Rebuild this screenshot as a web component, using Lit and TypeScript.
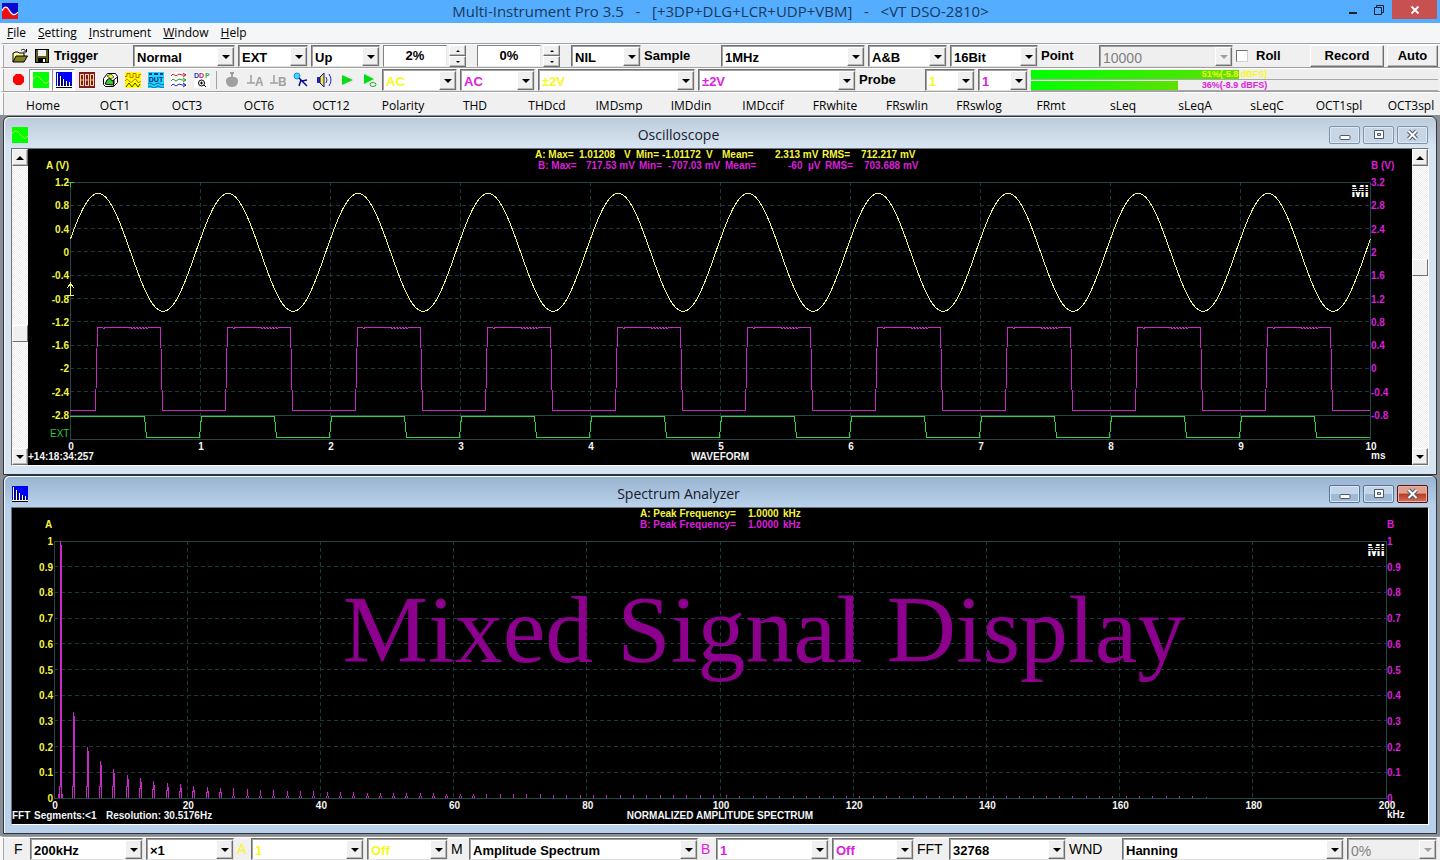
import { LitElement, html, svg, css, nothing, TemplateResult } from "lit";
import { customElement, property, state } from "lit/decorators.js";
import { classMap } from "lit/directives/class-map.js";
import { styleMap } from "lit/directives/style-map.js";

/* ---------- charts ---------- */

const chartStyles = css`
  :host {
    display: block;
    flex: 1;
    min-width: 0;
    min-height: 0;
    overflow: hidden;
    background: #000;
  }
  svg {
    display: block;
    font: bold 10px "Liberation Sans", Arial, sans-serif;
    shape-rendering: crispEdges;
  }
  .line { stroke: #1f4848; fill: none; }
  .dash { stroke: #1a3a3a; stroke-dasharray: 4 3; fill: none; }
  .a { fill: #f4f440; }
  .b { fill: #dc1edc; }
  .w { fill: #f4f4f4; }
  .g { fill: #2fc43c; font-weight: normal; }
  .end { text-anchor: end; }
  .mid { text-anchor: middle; }
  .trace { fill: none; stroke-width: 1; }
  .ta { stroke: #f6f67a; }
  .tb { stroke: #c828c8; }
  .tg { stroke: #35cf45; }
  .logo { fill: #fff; font-size: 16px; text-anchor: end; }
  .stripe { stroke: #000; }
  .banner { font: 96px "Liberation Serif", "Times New Roman", serif; fill: #8d008d; text-anchor: middle; }
`;

class Chart extends LitElement {
  @state() w = 1384;
  @state() h = 316;
  private watcher?: ResizeObserver;
  connectedCallback() {
    super.connectedCallback();
    this.watcher = new ResizeObserver(([e]) => {
      this.w = Math.round(e.contentRect.width);
      this.h = Math.round(e.contentRect.height);
    });
    this.watcher.observe(this);
  }
  disconnectedCallback() {
    super.disconnectedCallback();
    this.watcher?.disconnect();
  }
  logo(x: number, y: number) {
    return svg`<text class="logo" x=${x} y=${y + 11}>MI</text>
      ${[1, 3, 5].map((d) => svg`<line class="stripe" x1=${x - 20} x2=${x + 1} y1=${y + d + 0.5} y2=${y + d + 0.5} />`)}`;
  }
}

const px = (n: number) => Math.floor(n) + 0.5;

@customElement("scope-chart")
class ScopeChart extends Chart {
  static styles = chartStyles;

  render() {
    const { w, h } = this;
    const L = 42, R = w - 42, T = 33, B = h - 26, S = B - 24;
    const cx = w / 2;
    const step = (S - T) / 10;
    const per = (R - L) / 10;
    const mid = T + step * 3;
    const amp = (1.012 / 0.4) * step;

    const sine: string[] = [];
    for (let x = L; x <= R; x++) {
      const y = mid - amp * Math.sin(2 * Math.PI * ((x - L) / per + 0.037));
      sine.push(`${x + 0.5},${(y + 0.5).toFixed(1)}`);
    }
    const zero = T + step * 8;
    const hi = px(zero - (0.7 / 0.4) * step), lo = px(zero + (0.72 / 0.4) * step);
    const sq: string[] = [`${L},${lo}`];
    const ext: string[] = [`${L},${S + 1.5}`];
    for (let i = 0; i < 10; i++) {
      const x = L + i * per + 0.5;
      const up = x + 0.2 * per, dn = x + 0.7 * per;
      sq.push(`${up - 1},${lo}`, `${up},${zero}`, `${up + 1},${hi}`);
      sq.push(`${up + 6},${hi}`, `${up + 7},${hi + 1}`, `${up + 9},${hi}`, `${up + 34},${hi}`);
      for (let k = 36; k < 54; k += 3) sq.push(`${up + k},${hi + 1}`, `${up + k + 1},${hi}`);
      sq.push(`${dn - 1},${hi}`, `${dn},${zero}`, `${dn + 1},${lo}`);
      const fall = x + 0.577 * per;
      ext.push(`${fall - 1},${S + 1.5}`, `${fall + 1},${B - 1.5}`);
      ext.push(`${x + per - 1},${B - 1.5}`);
      if (i < 9) ext.push(`${x + per + 1},${S + 1.5}`);
    }
    sq.push(`${R},${lo}`);
    ext.push(`${R},${B - 1.5}`);

    const ticks = Array.from({ length: 11 }, (_, i) => i);
    const fmt = (n: number) => String(Math.round(n * 10) / 10);
    const rowA: [number, string][] = [
      [-185, "A: Max="], [-141, "1.01208"], [-96, "V"], [-84, "Min="], [-58, "-1.01172"], [-14, "V"],
      [2, "Mean="], [55, "2.313 mV"], [102, "RMS="], [141, "712.217 mV"],
    ];
    const rowB: [number, string][] = [
      [-182, "B: Max="], [-134, "717.53 mV"], [-81, "Min="], [-52, "-707.03 mV"],
      [5, "Mean="], [68, "-60"], [88, "µV"], [105, "RMS="], [144, "703.688 mV"],
    ];

    return html`<svg width=${w} height=${h} role="img" aria-label="Waveform">
      ${ticks.slice(1, 10).map((i) => svg`
        <line class="dash" x1=${L} x2=${R} y1=${px(T + i * step)} y2=${px(T + i * step)} />
        <line class="dash" x1=${px(L + i * per)} x2=${px(L + i * per)} y1=${T} y2=${B} />`)}
      <rect class="line" x=${L + 0.5} y=${T + 0.5} width=${R - L} height=${B - T} />
      <line class="line" x1=${L} x2=${R} y1=${S + 0.5} y2=${S + 0.5} />
      <polyline class="trace ta" points=${sine.join(" ")} />
      <polyline class="trace tb" points=${sq.join(" ")} />
      <polyline class="trace tg" points=${ext.join(" ")} />
      <path class="trace tg" d="M${L - 3} ${T + 0.5}h7M${L + 0.5} ${T}v5" />
      <path class="trace ta" d="M${L - 3} ${T + 113.5}h7M${L + 0.5} ${T + 113}v-12l-3 5m3 -5l3 5" />
      ${ticks.map((i) => svg`
        <text class="a end" x=${L - 1} y=${Math.round(T + i * step + 4)}>${fmt(1.2 - 0.4 * i)}</text>
        <text class="b" x=${R + 1} y=${Math.round(T + i * step + 4)}>${fmt(3.2 - 0.4 * i)}</text>
        <text class="w mid" x=${L + 1 + i * per} y=${B + 11}>${i}</text>`)}
      <text class="a" x="18" y="20">A (V)</text>
      <text class="b" x=${R + 1} y="20">B (V)</text>
      <text class="g" x="22" y=${B - 2}>EXT</text>
      <text class="w" x="0" y=${h - 5}>+14:18:34:257</text>
      <text class="w mid" x=${cx} y=${h - 5}>WAVEFORM</text>
      <text class="w" x=${R + 1} y=${h - 6}>ms</text>
      ${rowA.map(([dx, t]) => svg`<text class="a" x=${cx + dx} y="9">${t}</text>`)}
      ${rowB.map(([dx, t]) => svg`<text class="b" x=${cx + dx} y="20">${t}</text>`)}
      ${this.logo(R - 1, T + 4)}
    </svg>`;
  }
}

@customElement("spectrum-chart")
class SpectrumChart extends Chart {
  static styles = chartStyles;

  render() {
    const { w, h } = this;
    const L = 42, R = w - 42, T = 33, B = h - 26;
    const cx = w / 2;
    const step = (B - T) / 10, per = (R - L) / 10;
    const ticks = Array.from({ length: 11 }, (_, i) => i);
    const spikes: string[] = [];
    for (let k = 1; k < 174; k += 2) {
      const x = Math.floor(L + (k / 200) * (R - L)) + 0.5;
      const a = (B - T) / k;
      const top = B - Math.max(1, a);
      if (a > 10) {
        const foot = B - Math.min(12, a / 2);
        spikes.push(`M${x - 1} ${B}V${foot}L${x} ${foot}V${top}M${x + 1} ${B}V${top + 4}`);
        if (k === 1) spikes.push(`M${x - 2} ${B}v-4M${x + 2} ${B}v-4`);
      } else if (a > 4) {
        spikes.push(`M${x - 1} ${B}v-2M${x} ${B - 2}V${top}M${x + 1} ${B}v-2`);
      } else {
        spikes.push(`M${x} ${B}V${top}`);
      }
    }
    return html`<svg width=${w} height=${h} role="img" aria-label="Normalized amplitude spectrum">
      ${ticks.slice(1, 10).map((i) => svg`
        <line class="dash" x1=${L} x2=${R} y1=${px(T + i * step)} y2=${px(T + i * step)} />
        <line class="dash" x1=${px(L + i * per)} x2=${px(L + i * per)} y1=${T} y2=${B} />`)}
      <rect class="line" x=${L + 0.5} y=${T + 0.5} width=${R - L} height=${B - T} />
      <path class="trace tb" d=${spikes.join("")} />
      ${ticks.map((i) => svg`
        <text class="a end" x=${L - 1} y=${Math.round(T + i * step + 4)}>${(10 - i) / 10}</text>
        <text class="b" x=${R + 1} y=${Math.round(T + i * step + 4)}>${(10 - i) / 10}</text>
        <text class="w mid" x=${L + 1 + i * per} y=${B + 11}>${i * 20}</text>`)}
      <text class="a" x="33" y="20">A</text>
      <text class="b" x=${R + 1} y="20">B</text>
      <text class="a" x=${cx - 80} y="9">A: Peak Frequency=</text>
      <text class="a" x=${cx + 28} y="9">1.0000</text>
      <text class="a" x=${cx + 63} y="9">kHz</text>
      <text class="b" x=${cx - 80} y="20">B: Peak Frequency=</text>
      <text class="b" x=${cx + 28} y="20">1.0000</text>
      <text class="b" x=${cx + 63} y="20">kHz</text>
      <text class="w" x="0" y=${h - 5}>FFT</text>
      <text class="w" x="22" y=${h - 5}>Segments:&lt;1</text>
      <text class="w" x="94" y=${h - 5}>Resolution: 30.5176Hz</text>
      <text class="w mid" x=${cx} y=${h - 5}>NORMALIZED AMPLITUDE SPECTRUM</text>
      <text class="w" x=${R + 1} y=${h - 6}>kHz</text>
      ${this.logo(R - 1, T + 4)}
      <text class="banner" x=${cx + 44} y="154">Mixed Signal Display</text>
    </svg>`;
  }
}

/* ---------- icons ---------- */

const ico = (name: string, body: TemplateResult) =>
  html`<svg class="ico" width="16" height="16" viewBox="0 0 16 16" role="img" aria-label=${name}>${body}</svg>`;

const openIcon = ico("Open", svg`
  <path d="M1 14V5h1l1-1h3l1 1h5v3" fill="#ffff99" stroke="#000"/>
  <path d="M1 14l3-6h11.500l-3.500 6z" fill="#808020" stroke="#000"/>
  <path d="M9 2.500c2-2 4-1 5 1M14.500 1v3h-3" fill="none" stroke="#000"/>`);
const saveIcon = ico("Save", svg`
  <rect x="1.500" y="1.500" width="13" height="13" fill="#5c5c1c" stroke="#000"/>
  <rect x="4" y="2" width="8" height="6" fill="#f0f0f0"/>
  <rect x="4" y="10" width="8" height="4" fill="#000"/><rect x="9" y="11" width="2" height="3" fill="#fff"/>`);
const sineIcon = ico("Oscilloscope", svg`
  <rect width="16" height="16" fill="#00ff00"/>
  <path d="M0 7C2 3 5 3 8 7s5 6 8 2" fill="none" stroke="#c8e040"/>`);
const barsIcon = ico("Spectrum analyzer", svg`
  <rect width="16" height="14" fill="#0000ff"/>
  <path d="M0 14.500h16" stroke="#fff"/><path d="M0 15.500h16" stroke="#000"/>
  <path d="M1.500 1v13M4.500 4v10M7.500 7v7M10.500 9v5M13.500 10v4" stroke="#fff"/>
  <path d="M2.500 2v12M5.500 5v9M8.500 8v6M11.500 10v4M14.500 11v3" stroke="#000"/>`);
const appIcon = ico("Multi-Instrument", svg`
  <rect width="16" height="16" fill="#ee1010"/>
  <path d="M0 0h16v10q-3 4-5 1L7 6Q4 2 0 7z" fill="#0808d0"/>
  <path d="M0 8c2-5 5-5 7-1s5 7 9 2" fill="none" stroke="#fff" stroke-width="1.200"/>`);

const tools: { icon: TemplateResult; on?: boolean; sep?: boolean }[] = [
  { icon: ico("Start", svg`<path d="M6 2h5l3 3v5l-3 3H6l-3-3V5z" fill="#f00"/>`) },
  { icon: sineIcon, on: true },
  { icon: barsIcon, on: true },
  { icon: ico("Multimeter", svg`<rect width="16" height="16" fill="#801828"/>
    <g fill="none" stroke="#f4d890"><rect x="1.500" y="2.500" width="3" height="11"/><rect x="6.500" y="2.500" width="3" height="11"/><rect x="11.500" y="2.500" width="3" height="11"/><path d="M1 8h4M6 8h4M11 8h4"/></g>`) },
  { icon: ico("3D plot", svg`<path d="M1.500 6.500l4-5h8l2 3v6l-4 4h-8l-2-2z" fill="#fff" stroke="#000"/>
    <path d="M3 12l2-4 3-2 2 3 2-1v4l-2 1z" fill="#30d030" stroke="#000"/><path d="M5 4l4-2 3 3-3 2z" fill="#f0f040" stroke="#000" stroke-width=".6"/><path d="M11.500 14V8l4-3" fill="none" stroke="#000"/>`) },
  { icon: ico("Signal generator", svg`<rect width="16" height="16" fill="#ffff00"/>
    <path d="M0 4.500h2v-3h3v4h3v-4h3v4h3v-3h2" fill="none" stroke="#c07000"/>
    <path d="M0 9c2-3 3-1 4 0s3 2 4 0 3-3 4 0 3 1 4 0" fill="none" stroke="#c06000"/>
    <path d="M1 15l3-4 3 4 3-4 3 4 2-3" fill="none" stroke="#404000"/>`) },
  { icon: ico("Device test plan", svg`<rect width="16" height="16" fill="#20d8f8"/>
    <path d="M1 2h3M6 2h4M12 2h3" stroke="#0030a0" stroke-width="2"/>
    <text x="8" y="10" font-size="7" font-weight="bold" text-anchor="middle" fill="#002080">DUT</text>
    <path d="M0 12q2-2 4 0t4 0 4 0 4 0M0 15q2-2 4 0t4 0 4 0 4 0" fill="none" stroke="#0060c0"/>`) },
  { icon: ico("Data logger", svg`<rect width="16" height="16" fill="#fff"/><g fill="none">
    <path d="M0 4l2-2 3 2 3-2 3 1h4M12 1l3 2-3 2" stroke="#d02020"/>
    <path d="M0 9l2-2 3 2 3-2 3 1h4M12 6l3 2-3 2" stroke="#20a020"/>
    <path d="M0 14l2-2 3 2 3-2 3 1h4M12 11l3 2-3 2" stroke="#2020c0"/></g>`) },
  { icon: ico("Derived data point viewer", svg`<rect width="16" height="16" fill="#fff"/>
    <text x="0" y="6" font-size="7" fill="#2030d0">D</text><text x="5" y="6" font-size="7" fill="#c01880">D</text><text x="11" y="6" font-size="7" fill="#30b030">P</text>
    <circle cx="7.500" cy="11" r="3" fill="none" stroke="#000"/><path d="M6 11h3M7.500 9.500v3M10 13l2 2" stroke="#000"/>`), sep: true },
  { icon: ico("Calibrate", svg`<path d="M6 0h4v2H9v3c4 0 5 2 5 4 0 3-2 6-6 6s-6-3-6-6c0-2 1-4 5-4V2H6z" fill="#a0a0a0"/>`) },
  { icon: ico("Zero A", svg`<path d="M4 3v8M0 11h8" stroke="#a0a0a0" stroke-width="1.500"/><text x="8" y="14" font-size="12" fill="#a0a0a0">A</text>`) },
  { icon: ico("Zero B", svg`<path d="M4 3v8M0 11h8" stroke="#a0a0a0" stroke-width="1.500"/><text x="8" y="14" font-size="12" fill="#a0a0a0">B</text>`) },
  { icon: ico("Input device", svg`<circle cx="4" cy="4" r="3" fill="#40d8f8" stroke="#2090d0"/><path d="M6 6l8 8M8 8l-2 6M9 9l5-1" stroke="#0808a0" stroke-width="1.500" fill="none"/>`) },
  { icon: ico("Output device", svg`<path d="M1 5h3v6H1z" fill="#2020c0"/><path d="M4 5l4-4v14l-4-4z" fill="#f0e840" stroke="#101080"/>
    <path d="M10 5q2 3 0 6M13 2q4 6 0 12" fill="none" stroke="#2828b8"/>`) },
  { icon: ico("Play", svg`<path d="M3 3l11 5-11 5z" fill="#00e010"/>`) },
  { icon: ico("Play loop", svg`<path d="M2 2l10 5-10 5z" fill="#00e010"/><ellipse cx="11" cy="12.500" rx="3" ry="2" fill="none" stroke="#20b020"/>`) },
];

/* ---------- application ---------- */

type Item =
  | { kind: "combo"; name: string; value: string; w: number; tone?: string; off?: boolean }
  | { kind: "label"; text: string; w: number; tone?: string; plain?: boolean }
  | { kind: "spin"; name: string; value: string };

const combo = (name: string, value: string, w: number, tone = "", off = false): Item =>
  ({ kind: "combo", name, value, w, tone, off });
const label = (text: string, w: number, tone = "", plain = false): Item =>
  ({ kind: "label", text, w, tone, plain });

const triggerRow: Item[] = [
  label("Trigger", 76),
  combo("Trigger mode", "Normal", 102), combo("Trigger source", "EXT", 70), combo("Trigger edge", "Up", 69),
  { kind: "spin", name: "Trigger level", value: "2%" }, { kind: "spin", name: "Trigger delay", value: "0%" },
  combo("Filter", "NIL", 70), label("Sample", 74), combo("Sampling rate", "1MHz", 144),
  combo("Channels", "A&B", 79), combo("Resolution", "16Bit", 88), label("Point", 55),
  combo("Record length", "10000", 134, "", true),
];
const rangeRow: Item[] = [
  combo("Coupling A", "AC", 75, "ya"), combo("Coupling B", "AC", 75, "mb"),
  combo("Range A", "±2V", 157, "ya"), combo("Range B", "±2V", 158, "mb"),
  label("Probe", 63), combo("Probe A", "1", 50, "ya"), combo("Probe B", "1", 50, "mb"),
];
const bottomRow: Item[] = [
  label("F", 13, "", true), combo("Frequency span", "200kHz", 113), combo("Zoom", "×1", 88),
  label("A", 11, "ya", true), combo("Multiplier A", "1", 113, "ya"), combo("Mode A", "Off", 81, "ya"),
  label("M", 15, "", true), combo("View", "Amplitude Spectrum", 229),
  label("B", 12, "mb", true), combo("Multiplier B", "1", 113, "mb"), combo("Mode B", "Off", 82, "mb"),
  label("FFT", 29, "", true), combo("FFT size", "32768", 117), label("WND", 50, "", true),
  combo("Window function", "Hanning", 222), combo("Overlap", "0%", 90, "", true),
];
const tabs = "Home OCT1 OCT3 OCT6 OCT12 Polarity THD THDcd IMDsmp IMDdin IMDccif FRwhite FRswlin FRswlog FRmt sLeq sLeqA sLeqC OCT1spl OCT3spl".split(" ");

@customElement("app-root")
class AppRoot extends LitElement {
  @property({ type: Boolean }) roll = false;

  static styles = css`
    * { box-sizing: border-box; }
    :host {
      display: flex;
      flex-direction: column;
      height: 100vh;
      overflow: hidden;
      background: #f0f0f0;
      color: #000;
      font: 12px "Open Sans", "Segoe UI", sans-serif;
    }
    button, select, input { font: inherit; color: inherit; margin: 0; padding: 0; border: 0; border-radius: 0; }
    .ico { display: block; flex: none; font-family: "Liberation Sans", Arial, sans-serif; }

    .titlebar { display: flex; height: 23px; background: #55adff; color: #17395c; flex: none; }
    .lead { flex: 1; padding: 3px 2px; }
    .caption { font-size: 15px; line-height: 23px; white-space: pre; }
    .wm { flex: 1; display: flex; justify-content: flex-end; padding-right: 3px; }
    .wm button { width: 26px; height: 19px; background: none; display: grid; place-items: center; }
    .wm .shut { width: 45px; background: #c75050; }

    nav { display: flex; gap: 12px; height: 20px; padding: 0 7px; background: #f5f6f7; line-height: 20px; flex: none; }
    a { color: inherit; text-decoration: none; }

    .bar {
      display: flex; align-items: center; gap: 3px; height: 24px; flex: none; padding: 1px 2px 0 10px;
      border-top: 1px solid #a0a0a0; border-left: 3px solid #f8f8f8; box-shadow: inset 0 1px #fff, inset 1px 0 #a8a8a8;
      font: bold 13px/20px "Liberation Sans", Arial, sans-serif;
      overflow: hidden;
    }
    .bar.top { padding-left: 7px; }
    .bar.mid { padding-left: 3px; }
    .bar.low { padding-left: 11px; }
    .lbl { flex: none; white-space: nowrap; }
    .plain { font-weight: normal; font-size: 14px; }
    .ya { color: #f8f820; }
    .mb { color: #e020e0; }
    .iconbtn { width: 19px; height: 20px; background: none; display: grid; place-items: center; flex: none; }

    .combo {
      position: relative; display: flex; height: 22px; flex: none; background: #fff;
      border: 1px solid; border-color: #707070 #e0e0e0 #e0e0e0 #707070; box-shadow: inset 1px 1px #a0a0a0;
    }
    .combo select { flex: 1; min-width: 0; appearance: none; background: none; padding: 2px 0 0 3px; opacity: 1; outline: 0; }
    .combo.off { background: #efefef; color: #808080; }
    .combo.off select { font-weight: normal; font-size: 14px; }
    .drop {
      position: absolute; right: 0; top: 1px; bottom: 0; width: 17px; display: grid; place-items: center;
      pointer-events: none; color: #000;
    }
    .off .drop { color: #a0a0a0; }
    .raised, .drop {
      background: #f0f0f0; border: 1px solid; border-color: #fff #707070 #707070 #fff;
      box-shadow: inset -1px -1px #b8b8b8;
    }
    .tri { width: 0; height: 0; border: 4px solid transparent; border-top-color: currentColor; border-bottom: 0; }
    .tri.up { border-top: 0; border-bottom: 4px solid currentColor; }
    .tri.sm { border-left-width: 2px; border-right-width: 2px; border-top-width: 2px; }
    .tri.up.sm { border-top-width: 0; border-bottom-width: 2px; }

    .spin { display: flex; gap: 2px; width: 83px; height: 22px; flex: none; margin-right: 8px; }
    .spin input { flex: 1; min-width: 0; text-align: center; background: #fff; border: 1px solid; border-color: #808080 #e8e8e8 #e8e8e8 #808080; }
    .arrows { display: grid; grid-template-rows: 1fr 1fr; width: 17px; }
    .arrows button, .sbtn { display: grid; place-items: center; }

    .roll { display: flex; align-items: center; gap: 8px; width: 71px; flex: none; }
    .roll input { appearance: none; width: 12px; height: 12px; background: #fff; border: 1px solid; border-color: #707070 #d0d0d0 #d0d0d0 #707070; }
    .push { width: 74px; height: 22px; flex: none; }
    .push.fill { flex: 1; }

    .tools { display: flex; align-items: center; flex: none; margin-right: -2px; }
    .tool { width: 23px; height: 22px; background: none; display: grid; place-items: center; }
    .tool.on { border: 1px solid; border-color: #909090 #fff #fff #909090; background: #f8f8f8; }
    .sep { width: 1px; height: 18px; margin: 0 3px; background: #a0a0a0; }

    .meters { flex: 1; display: grid; grid-template-rows: 10px 10px; gap: 1px; }
    .meter { position: relative; background: #eee; border-bottom: 1px solid #a8a8a8; font-size: 9px; line-height: 9px; text-align: center; }
    .level { height: 100%; background: linear-gradient(90deg, #00ff00, #5de000); }
    .reading { position: absolute; inset: 0; }

    .tabs { display: flex; height: 24px; flex: none; padding-left: 4px; border-top: 1px solid #a0a0a0; border-left: 3px solid #f8f8f8; box-shadow: inset 0 1px #fff, inset 1px 0 #a8a8a8; overflow: hidden; }
    .tabs button { width: 72px; flex: none; background: none; line-height: 20px; padding-top: 4px; }

    .desk { flex: 1; min-height: 0; display: flex; flex-direction: column; padding: 1px 3px 2px; background: #8a8f96; }
    .win {
      flex: 1; min-height: 0; display: flex; flex-direction: column; padding: 0 7px 8px;
      border: 1px solid #2c3440; border-radius: 6px 6px 0 0; background: linear-gradient(#bccad9, #d7e4f2 30px);
      box-shadow: inset 1px 1px #f4f8fc;
    }
    .win.active { background: linear-gradient(#98b3d0, #b9d1ea 30px); }
    .head { display: flex; align-items: center; height: 31px; flex: none; padding: 5px 1px 0; }
    .head h2 { flex: 1; margin: 0; font-size: 14px; font-weight: normal; line-height: 20px; text-align: center; color: #15202c; }
    .ctl { display: flex; gap: 3px; }
    .ctl button {
      width: 31px; height: 18px; display: grid; place-items: center; border: 1px solid #7f93ad; border-radius: 2px;
      background: #c7d5e5; box-shadow: inset 0 0 0 1px #dde7f2;
    }
    .active .ctl button { border-color: #5b7290; background: linear-gradient(#c3d5ea 50%, #9fb9d6 50%); box-shadow: inset 0 0 0 1px #d7e5f5; }
    .active .ctl .kill { border-color: #5a1410; background: linear-gradient(#e0a090 45%, #bb3a22 50%, #d2705c); box-shadow: inset 0 0 0 1px #e8b4a8; }
    .client { flex: 1; min-height: 0; display: flex; border: 1px solid; border-color: #707478 #fff #fff #707478; }

    .scroll { width: 16px; flex: none; display: flex; flex-direction: column; background: repeating-conic-gradient(#fff 0 25%, #ececec 0 50%) 0 0 / 2px 2px; }
    .sbtn { height: 17px; flex: none; }
    .scroll input { writing-mode: vertical-lr; appearance: none; background: none; width: 16px; flex: 1; min-height: 0; }
    .scroll input::-webkit-slider-thumb {
      appearance: none; width: 16px; height: 17px; background: #f0f0f0;
      border: 1px solid; border-color: #fff #707070 #707070 #fff;
    }
  `;

  item(i: Item) {
    if (i.kind === "label")
      return html`<span class=${classMap({ lbl: true, plain: !!i.plain, ya: i.tone === "ya", mb: i.tone === "mb" })} style=${styleMap({ width: `${i.w}px` })}>${i.text}</span>`;
    if (i.kind === "spin")
      return html`<div class="spin"><input aria-label=${i.name} .value=${i.value} />
        <div class="arrows"><button class="raised" aria-label="Increase"><i class="tri up sm"></i></button><button class="raised" aria-label="Decrease"><i class="tri sm"></i></button></div></div>`;
    return html`<div class=${classMap({ combo: true, off: !!i.off, ya: i.tone === "ya", mb: i.tone === "mb" })} style=${styleMap({ width: `${i.w}px` })}>
      <select aria-label=${i.name} ?disabled=${i.off}><option>${i.value}</option></select>
      <span class="drop"><i class="tri"></i></span></div>`;
  }

  meter(name: string, pct: number, text: string, tone: string) {
    return html`<div class="meter ${tone}" role="meter" aria-label=${name} aria-valuenow=${pct}>
      <div class="level" style=${styleMap({ width: `${pct}%` })}></div><span class="reading">${text}</span></div>`;
  }

  scroll(name: string, value: number) {
    return html`<div class="scroll"><button class="sbtn raised" aria-label="Up"><i class="tri up"></i></button>
      <input type="range" aria-label=${name} min="0" max="100" .value=${String(value)} />
      <button class="sbtn raised" aria-label="Down"><i class="tri"></i></button></div>`;
  }

  win(title: string, icon: TemplateResult, active: boolean, body: TemplateResult) {
    return html`<section class=${classMap({ win: true, active })}>
      <header class="head">${icon}<h2>${title}</h2>
        <div class="ctl">
          <button aria-label="Minimize"><svg width="12" height="12"><rect x="1" y="6.500" width="10" height="4" rx="1" fill="#fff" stroke="#4c586c"/></svg></button>
          <button aria-label="Maximize"><svg width="12" height="12"><path d="M1.500 1.500h9v8h-9z" fill="#fff" stroke="#4c586c"/><path d="M4.500 4.500h3v2h-3z" fill="#c7d5e5" stroke="#4c586c"/></svg></button>
          <button class="kill" aria-label="Close"><svg width="13" height="12"><path d="M2.500 2l8 8M10.500 2l-8 8" stroke="#4c586c" stroke-width="4"/><path d="M2.500 2l8 8M10.500 2l-8 8" stroke="#fff" stroke-width="2"/></svg></button>
        </div>
      </header>
      <div class="client">${body}</div>
    </section>`;
  }

  render() {
    return html`
      <header class="titlebar">
        <div class="lead">${appIcon}</div>
        <div class="caption">Multi-Instrument Pro 3.5   -   [+3DP+DLG+LCR+UDP+VBM]   -   &lt;VT DSO-2810&gt;</div>
        <div class="wm">
          <button aria-label="Minimize"><svg width="12" height="12"><path d="M2 9h8" stroke="#10202e" stroke-width="2"/></svg></button>
          <button aria-label="Restore"><svg width="12" height="12"><path d="M1.500 3.500h7v7h-7zM3.500 3V1.500h7v7H9" fill="none" stroke="#10202e"/></svg></button>
          <button class="shut" aria-label="Close"><svg width="10" height="10"><path d="M1.500 1.500l7 7M8.500 1.500l-7 7" stroke="#fff" stroke-width="1.800"/></svg></button>
        </div>
      </header>
      <nav>
        <a href="#file"><u>F</u>ile</a><a href="#setting"><u>S</u>etting</a><a href="#instrument"><u>I</u>nstrument</a><a href="#window"><u>W</u>indow</a><a href="#help"><u>H</u>elp</a>
      </nav>
      <div class="bar top">
        <button class="iconbtn">${openIcon}</button>
        <button class="iconbtn">${saveIcon}</button>
        ${triggerRow.map((i) => this.item(i))}
        <label class="roll"><input type="checkbox" .checked=${this.roll} />Roll</label>
        <button class="push raised">Record</button>
        <button class="push fill raised">Auto</button>
      </div>
      <div class="bar mid">
        <div class="tools">
          ${tools.map((t) => html`<button class=${classMap({ tool: true, on: !!t.on })}>${t.icon}</button>${t.sep ? html`<i class="sep"></i>` : nothing}`)}
        </div>
        ${rangeRow.map((i) => this.item(i))}
        <div class="meters">
          ${this.meter("Level A", 51, "51%(-5.8 dBFS)", "ya")}
          ${this.meter("Level B", 36, "36%(-8.9 dBFS)", "mb")}
        </div>
      </div>
      <div class="tabs">${tabs.map((t) => html`<button>${t}</button>`)}</div>
      <main class="desk">
        ${this.win("Oscilloscope", sineIcon, false, html`${this.scroll("Offset A", 60)}<scope-chart></scope-chart>${this.scroll("Offset B", 35)}`)}
        ${this.win("Spectrum Analyzer", barsIcon, true, html`<spectrum-chart></spectrum-chart>`)}
      </main>
      <div class="bar low">${bottomRow.map((i) => this.item(i))}</div>
    `;
  }
}
